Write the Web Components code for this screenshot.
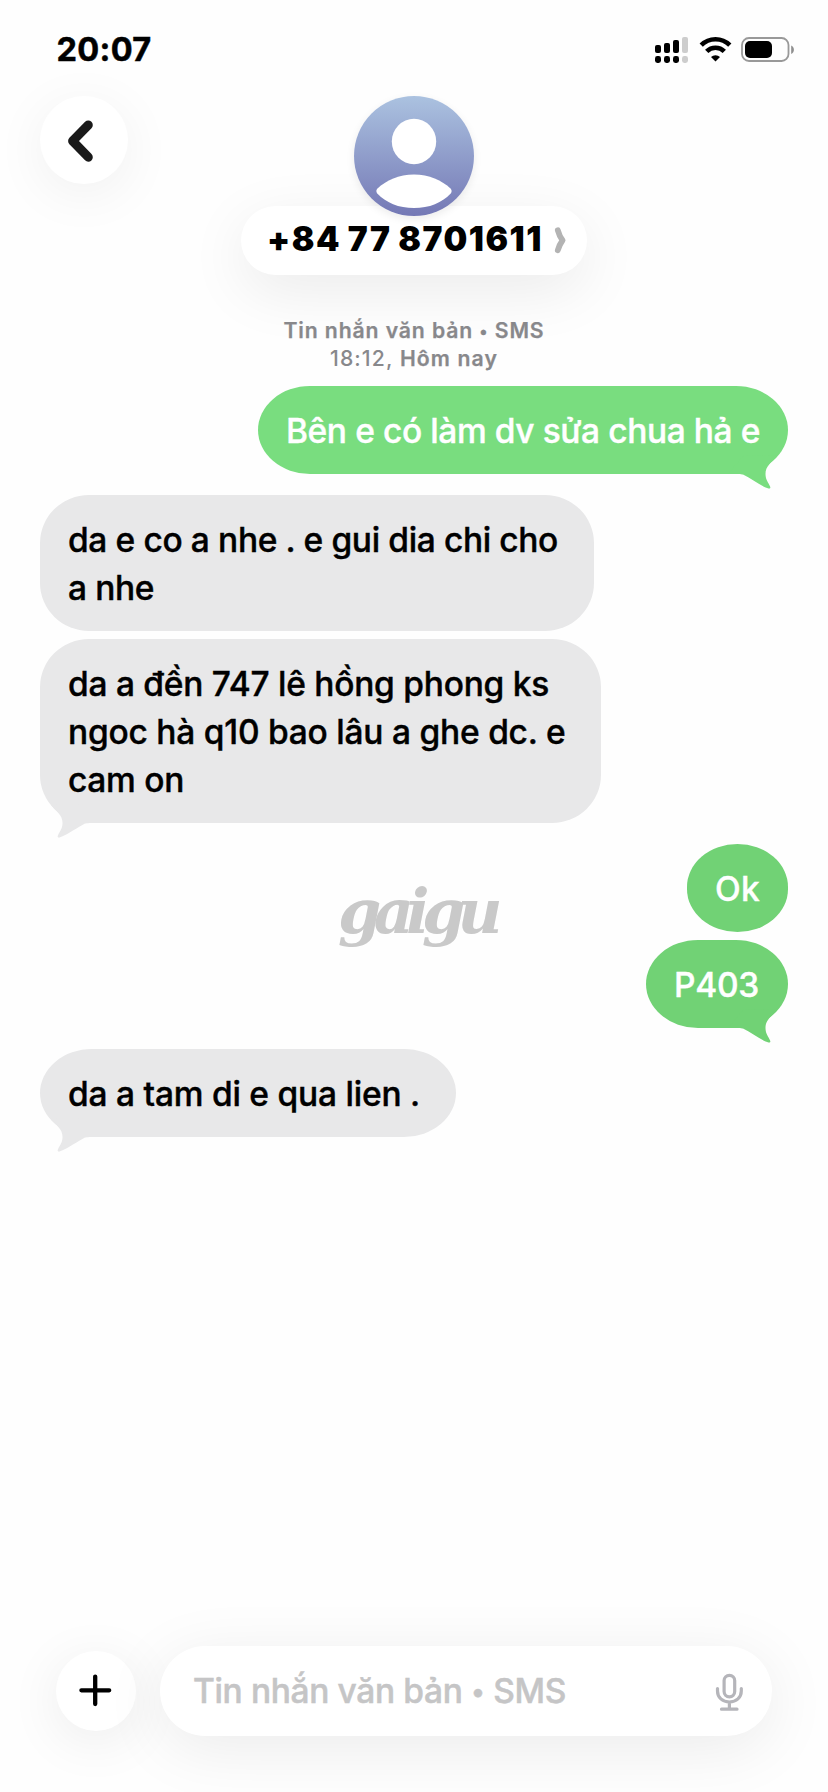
<!DOCTYPE html>
<html lang="vi">
<head>
<meta charset="utf-8">
<title>Tin nhắn</title>
<style>
  html, body { margin: 0; background: #fefefe; }
  body { width: 828px; height: 1792px; overflow: hidden; font-family: Inter, "Liberation Sans", sans-serif; color: #000; }
</style>
</head>
<body>
<chat-screen></chat-screen>
<script>
const define = (name, html, ready) => {
  const template = document.createElement('template');
  template.innerHTML = html;
  customElements.define(name, class extends HTMLElement {
    connectedCallback() {
      if (this.shadowRoot) return;
      this.attachShadow({ mode: 'open' }).append(template.content.cloneNode(true));
      if (ready) ready(this, this.shadowRoot);
    }
  });
};

/* One line of text, tracked so that it is exactly `width` pixels long. */
define('text-line', `
  <style>
    :host { display: flex; }
    span { flex: none; white-space: pre; }
  </style>
  <span><slot></slot></span>`, (host, root) => {
  const span = root.querySelector('span');
  const spacing = (Number(host.getAttribute('width')) - span.getBoundingClientRect().width) / host.textContent.length;
  span.style.letterSpacing = spacing.toFixed(3) + 'px';
});

define('status-bar', `
  <style>
    :host { display: flex; justify-content: space-between; align-items: flex-start; height: 96px; box-sizing: border-box; padding: 30px 32px 0 56.500px; }
    text-line { font-size: 32.500px; line-height: 40px; font-weight: 700; -webkit-text-stroke: .5px currentColor; }
    svg { display: block; }
  </style>
  <text-line width="95">20:07</text-line>
  <svg width="146" height="40" viewBox="650 30 146 40">
    <g fill="#000">
      <rect x="655" y="45" width="6" height="8" rx="2"/><rect x="664" y="43" width="6" height="10" rx="2"/><rect x="673" y="40" width="6" height="13" rx="2"/>
      <rect x="655" y="56" width="6" height="7" rx="2.4"/><rect x="664" y="56" width="6" height="7" rx="2.4"/><rect x="673" y="56" width="6" height="7" rx="2.4"/>
    </g>
    <g fill="#cdcdcd"><rect x="682" y="37" width="6" height="16" rx="2"/><rect x="682" y="56" width="6" height="7" rx="2.4"/></g>
    <g fill="none" stroke="#000" stroke-width="4.6">
      <path d="M701.2 45.2a20.2 20.2 0 0 1 28.6 0"/>
      <path d="M706.7 51.4a12.3 12.3 0 0 1 17.6 0"/>
    </g>
    <path d="M711 57a6.500 6.500 0 0 1 9 0l-4.500 4.400z" fill="#000"/>
    <rect x="742" y="38" width="46.500" height="23" rx="7" fill="none" stroke="#999" stroke-width="1.800"/>
    <rect x="745" y="41" width="27" height="17" rx="5" fill="#000"/>
    <path d="M791.200 45.500c3.600 1.600 3.600 7 0 8.600z" fill="#8f8f8f"/>
  </svg>`);

define('back-button', `
  <style>
    :host { display: block; width: 88px; height: 88px; border-radius: 50%; background: #fff; box-shadow: 0 10px 54px rgba(0,0,0,.06); }
    svg { display: block; }
  </style>
  <svg width="88" height="88" viewBox="0 0 88 88" fill="none" stroke="#1a1a1a" stroke-width="9" stroke-linecap="round" stroke-linejoin="round"><path d="M48.300 29 32.600 45 48.300 61.200"/></svg>`);

define('contact-avatar', `
  <style>
    :host { display: block; width: 120px; height: 120px; border-radius: 50%; box-shadow: 0 3px 8px rgba(0,0,0,.08); }
    svg { display: block; }
  </style>
  <svg width="120" height="120" viewBox="0 0 120 120">
    <defs><linearGradient id="sky" x1="0" y1="0" x2="0" y2="1"><stop offset="0" stop-color="#abc2e0"/><stop offset="1" stop-color="#7478b5"/></linearGradient></defs>
    <circle cx="60" cy="60" r="60" fill="url(#sky)"/>
    <ellipse cx="60" cy="45.500" rx="22.200" ry="22.800" fill="#fff"/>
    <path d="M60 78.500C75 78.500 88 84.500 96.500 92.500 98 94 98 95.800 96.700 97.400 88.500 106.500 75 112 60 112S31.500 106.500 23.300 97.400C22 95.800 22 94 23.500 92.500 32 84.500 45 78.500 60 78.500z" fill="#fff"/>
  </svg>`);

define('contact-pill', `
  <style>
    :host { display: flex; align-items: flex-start; box-sizing: border-box; width: 346px; height: 69px; padding: 13px 0 0 26px; border-radius: 35px; background: #fff; box-shadow: 0 16px 60px rgba(0,0,0,.08); }
    text-line { font-size: 33.500px; line-height: 40px; font-weight: 900; word-spacing: -1.500px; width: 283px; }
    svg { display: block; margin: 6px 0 0 3px; }
  </style>
  <text-line width="276">+84 77 8701611</text-line>
  <svg width="16" height="30" viewBox="0 0 16 30" fill="none" stroke="#b3b3b3" stroke-width="5.800" stroke-linecap="round" stroke-linejoin="round"><path d="M4.800 5.200Q6.500 11.500 9.600 15.300 6.500 19.500 4.800 25.300"/></svg>`);

define('chat-header', `
  <style>
    :host { display: grid; grid-template-columns: 88px 1fr 88px; padding: 0 40px; height: 220px; position: relative; }
    .contact { display: flex; flex-direction: column; align-items: center; }
    contact-avatar { position: relative; z-index: 1; margin-bottom: -10px; flex: none; }
  </style>
  <back-button></back-button>
  <div class="contact"><contact-avatar></contact-avatar><contact-pill></contact-pill></div>`);

define('thread-stamp', `
  <style>
    :host { display: flex; flex-direction: column; align-items: center; height: 70px; position: relative; color: #88888b; font-size: 21.200px; line-height: 28px; font-weight: 600; -webkit-text-stroke: .25px currentColor; }
    .day { display: flex; justify-content: center; }
    .time { font-weight: 500; -webkit-text-stroke: 0; }
    .dot { font-size: .78em; line-height: 1px; vertical-align: 1.500px; }
  </style>
  <text-line width="261">Tin nhắn văn bản <span class="dot">•</span> SMS</text-line>
  <div class="day"><text-line class="time" width="70">18:12, </text-line><text-line width="98">Hôm nay</text-line></div>`);

define('message-bubble', `
  <style>
    :host { display: block; position: relative; box-sizing: border-box; padding: 21px 28px 19px; margin-left: 40px; background: var(--fill); color: #000; font-size: 33.500px; line-height: 48px; font-weight: 500; -webkit-text-stroke: .4px currentColor; border-radius: 49px / 48px; --fill: #e8e8e9; }
    :host([from="me"]) { margin: 0 40.500px 0 auto; color: #fff; --fill: #71d275; }
    :host([tone="light"]) { --fill: #79dd7f; }
    :host([single]) { border-radius: 52px / 44px; }
    svg { display: none; position: absolute; left: 10px; bottom: -15px; fill: var(--fill); }
    :host([tail]) svg { display: block; }
    :host([from="me"]) svg { left: auto; right: 10px; transform: scaleX(-1); }
  </style>
  <slot></slot>
  <svg width="50" height="42" viewBox="0 0 50 42"><path d="M1 9C7 16 12.500 19 12.500 27 12.500 33 9.500 35.500 7.800 39.800 7.200 41.500 8.500 42 10.200 41.300 18 38.500 27 31.500 35 27.500 37 26.800 40 27 50 26.900L34 8z"/></svg>`, host => {
  host.style.width = host.getAttribute('width') + 'px';
  host.style.marginBottom = host.getAttribute('gap') + 'px';
});

define('water-mark', `
  <style>
    :host { position: absolute; left: 338px; top: 880px; color: #c9c9c9; font: italic 700 62px/64px "DejaVu Serif", serif; }
  </style>
  <text-line width="157">gaigu</text-line>`);

define('compose-bar', `
  <style>
    :host { display: flex; align-items: center; gap: 24px; position: absolute; left: 0; right: 0; bottom: 56px; padding: 0 56px; }
    .add { width: 80px; height: 80px; flex: none; border-radius: 50%; background: #fff; box-shadow: 0 10px 54px rgba(0,0,0,.075); }
    .field { flex: 1; display: flex; justify-content: space-between; align-items: center; height: 90px; box-sizing: border-box; padding: 0 26px 0 33px; border-radius: 45px; background: #fff; box-shadow: 0 12px 64px rgba(0,0,0,.08); color: #c5c5c6; font-size: 33.500px; line-height: 48px; font-weight: 500; -webkit-text-stroke: .5px currentColor; }
    .dot { font-size: .78em; line-height: 1px; vertical-align: 2px; }
    svg { display: block; }
  </style>
  <div class="add"><svg width="80" height="80" viewBox="0 0 80 80" stroke="#000" stroke-width="4.300" stroke-linecap="round"><path d="M25.400 39.300h27.800M39.200 25.600v27.500"/></svg></div>
  <div class="field">
    <text-line width="373">Tin nhắn văn bản <span class="dot">•</span> SMS</text-line>
    <svg width="34" height="42" viewBox="712 1670 34 42" fill="none" stroke="#b5b5ba" stroke-width="3.200" stroke-linecap="round" stroke-linejoin="round"><rect x="724.100" y="1675.300" width="10.600" height="21.500" rx="5.300"/><path d="M717.500 1688.500v2.500c0 6.500 5 11 11.900 11s11.900-4.500 11.900-11v-2.500M729.400 1702v6.500M721.500 1709.200h15.500"/></svg>
  </div>`);

define('chat-screen', `
  <style>
    :host { display: block; position: relative; width: 828px; height: 1792px; overflow: hidden; }
    main { display: flex; flex-direction: column; align-items: flex-start; }
  </style>
  <status-bar></status-bar>
  <chat-header></chat-header>
  <thread-stamp></thread-stamp>
  <main>
    <message-bubble from="me" tone="light" single tail width="529.500" gap="21"><text-line width="474">Bên e có làm dv sửa chua hả e</text-line></message-bubble>
    <message-bubble width="553.500" gap="8"><text-line width="490">da e co a nhe . e gui dia chi cho</text-line><text-line width="86">a nhe</text-line></message-bubble>
    <message-bubble tail width="561" gap="21"><text-line width="481">da a đền 747 lê hồng phong ks</text-line><text-line width="497.500">ngoc hà q10 bao lâu a ghe dc. e</text-line><text-line width="116">cam on</text-line></message-bubble>
    <message-bubble from="me" single width="100.500" gap="8"><text-line width="45">Ok</text-line></message-bubble>
    <message-bubble from="me" single tail width="141.500" gap="21"><text-line width="85">P403</text-line></message-bubble>
    <message-bubble single tail width="416" gap="0"><text-line width="352">da a tam di e qua lien .</text-line></message-bubble>
  </main>
  <water-mark></water-mark>
  <compose-bar></compose-bar>`);
</script>
</body>
</html>
